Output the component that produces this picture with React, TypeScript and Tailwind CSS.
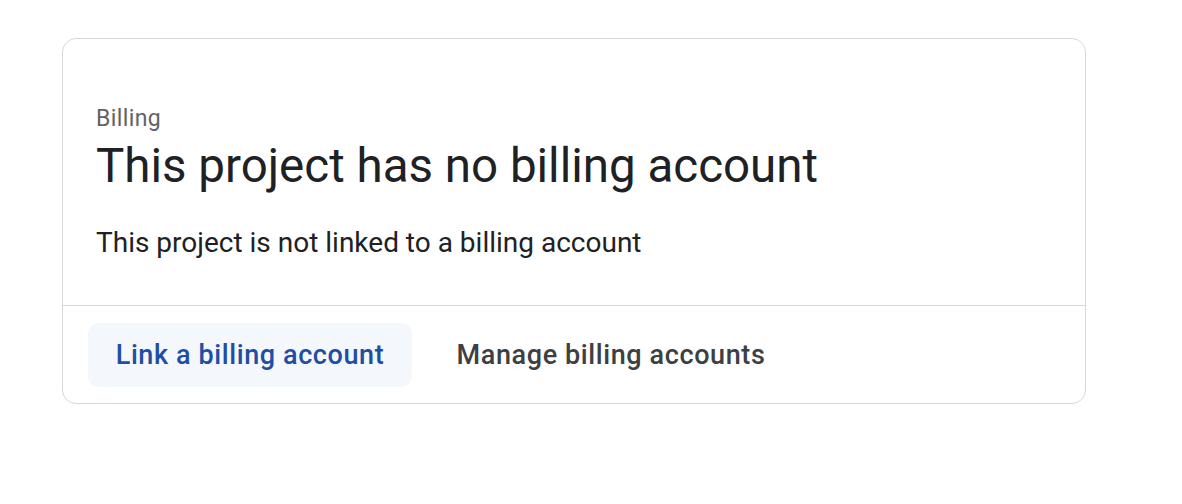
export default function App() {
  return (
    <div className="min-h-screen bg-white pl-[62px] pt-[38px]" style={{ fontFamily: "Roboto, 'Liberation Sans', sans-serif" }}>
      <div className="w-[1024px] rounded-[14px] border-[1.5px] border-[#d6d8dc] bg-white">
        <div className="border-b-[1.5px] border-[#d6d8dc] px-[33px] pt-[65px] pb-[44px]">
          <div className="text-[23px] leading-[30px] tracking-[0.4px] text-[#5f6368]">Billing</div>
          <h1 className="mt-1 text-[47.5px] leading-[56px] text-[#202124]">
            This project has no billing account
          </h1>
          <p className="mt-[31px] text-[28px] leading-[36px] text-[#202124]">
            This project is not linked to a billing account
          </p>
        </div>
        <div className="flex items-center gap-4 px-[25px] pt-[17px] pb-[16px]">
          <button className="flex h-16 w-[324px] items-center justify-center rounded-[10px] bg-[#f4f7fc] text-[27px] font-medium tracking-[0.6px] text-[#1f4ea3]">
            Link a billing account
          </button>
          <button className="flex h-16 w-[366px] items-center justify-center rounded-[10px] text-[27px] font-medium tracking-[0.6px] text-[#3c4043]">
            Manage billing accounts
          </button>
        </div>
      </div>
    </div>
  );
}
